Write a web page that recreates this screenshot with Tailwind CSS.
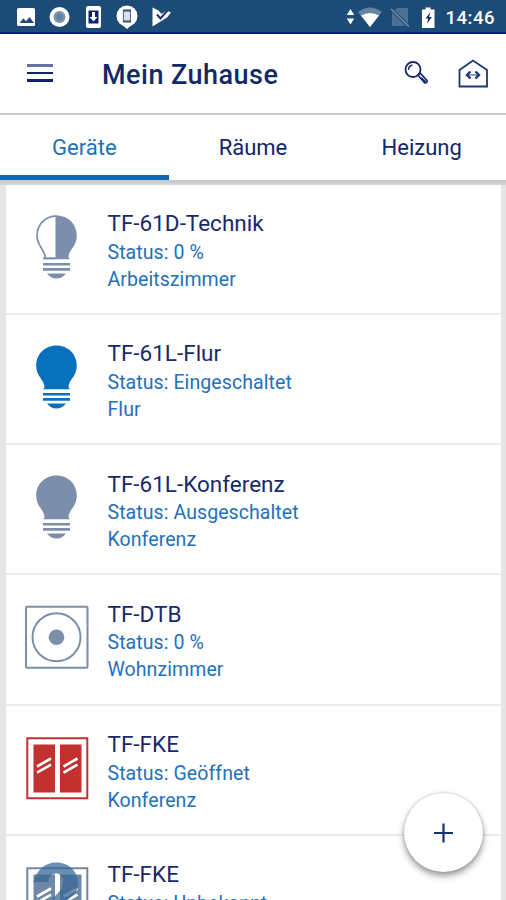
<!DOCTYPE html>
<html lang="de">
<head>
<meta charset="utf-8">
<title>Mein Zuhause</title>
<script src="https://cdn.jsdelivr.net/npm/@tailwindcss/browser@4"></script>
</head>
<body class="h-[900px] w-[506px] overflow-hidden bg-[#e6e6e6] font-['Roboto',sans-serif] text-[#10266b]">
<svg class="hidden">
  <defs>
    <symbol id="bulb" viewBox="0 0 64 64">
      <path d="M31.500.5C19.500.5 11.200 9.500 11.200 20.500C11.200 32 19.500 34.500 19.500 42.500L18 44.200H45L43.500 42.500C43.500 34.500 51.800 32 51.800 20.500C51.800 9.500 43.500.5 31.500.5Z"/>
      <path d="M18 48h27v2.500H18zM18 53h27v2.700H18zM22 58.500h19c-2 3-6 5-9.500 5s-7.500-2-9.500-5z"/>
    </symbol>
    <symbol id="window" viewBox="0 0 64 64">
      <path d="M2.300 2.300h60v60h-60z" fill="none" stroke="currentColor" stroke-width="2"/>
      <path d="M8.500 8.500h21.500v48H8.500zM35 8.500h21.500v48H35z" fill="currentColor"/>
      <path d="M12 30.500l14-8M12 36.700l14-8M38.500 30.500l14-8M38.500 36.700l14-8" stroke="#fff" stroke-width="2.600"/>
    </symbol>
  </defs>
</svg>
<div class="flex h-[900px] flex-col overflow-hidden">
  <div class="flex h-[34px] shrink-0 items-center justify-between border-b-2 border-[#0c216b] bg-[#1d4b78] text-white">
    <svg class="h-8 w-[180px]" viewBox="0 0 180 32" fill="#fff">
      <rect x="17" y="8" width="18" height="18" rx="1.500"/>
      <path d="M19.500 23l4-4.800 2.500 3 3.500-4.200 4.500 6z" fill="#1d4b78"/>
      <circle cx="59.500" cy="17" r="10"/><circle cx="59.500" cy="17" r="6" fill="#7793ad"/><circle cx="59.500" cy="17" r="3.200" fill="#6282a0"/>
      <rect x="86" y="6" width="15" height="22" rx="2"/>
      <path d="M88.500 10.500h10v13h-10z" fill="#0c216b"/><path d="M92 12h3v5h2.500l-4 4.500-4-4.500H92z"/>
      <circle cx="127" cy="16" r="10.500"/><path d="M121 24h12l-6 5z"/>
      <rect x="123.500" y="10.500" width="7" height="11" rx=".5" fill="#d9e0e8" stroke="#5e7692" stroke-width="1.200"/><path d="M123 10.500h8M123 21.500h8" stroke="#33507a" stroke-width="1.800"/>
      <path d="M152.500 7.500l6 3 3 3.500 5-3.500 4.500 2-4 5-14.500 9z"/><path d="M157 14.500l3.500 4 7-8" fill="none" stroke="#1d3577" stroke-width="2"/>
    </svg>
    <div class="flex items-center pr-[11px]">
      <svg class="h-8 w-[100px]" viewBox="0 0 100 32" fill="#fff">
        <path d="M2.800 15l3.700-6 3.700 6zM2.800 18.500h7.400l-3.700 6z"/>
        <path d="M14 12q12-9 24 0L26 27z" fill="#6784a2"/><path d="M17 15.500q9-5 18 0L26 27z"/>
        <path d="M53 8h11v18H48V13z" fill="#4c7094"/><path d="M47 9l18 17.500" stroke="#1d4b78" stroke-width="3.500"/><path d="M47 9l18 17.500" stroke="#7690aa" stroke-width="1.500"/>
        <path d="M78 9.500h3.500V7.500h5v2h4V28H78z"/><path d="M86.500 12l-5 6.500h2.800L83 24l4.800-7H85z" fill="#0c216b"/>
      </svg>
      <div class="pt-[3px] pl-[2px] text-[18.500px] leading-[30px] font-medium tracking-[0.5px]">14:46</div>
    </div>
  </div>
  <header class="flex h-[79px] shrink-0 items-center bg-white">
    <div class="ml-[27px] flex w-[26px] flex-col gap-[5px] pb-[2px]">
      <div class="h-[3px] bg-[#65749f]"></div><div class="h-[2.500px] bg-[#10206b]"></div><div class="h-[2.500px] bg-[#10206b]"></div>
    </div>
    <h1 class="ml-[49px] pt-[3px] text-[27px] font-medium tracking-[0.48px] text-[#0f2a66]">Mein Zuhause</h1>
    <svg class="mt-[-1px] mr-[29px] ml-auto h-[26px] w-[26px]" viewBox="0 0 26 26" fill="none" stroke="#12286c">
      <circle cx="10" cy="9.500" r="7.500" stroke-width="1.800"/><path d="M5.500 10c0-3 1.500-4.500 4-5" stroke-width="1.300"/>
      <path d="M15 15l2-2 7 7.500c.8 1.500-1 3-2.500 2.200z" stroke-width="1.700"/><path d="M18 18l4.500 4" stroke-width="2"/>
    </svg>
    <svg class="mr-[18px] mb-[2px] h-[30px] w-[30px]" viewBox="0 0 30 30" fill="none" stroke="#1d3679">
      <path d="M1.500 12L15 2.500l14 9.500V28.500H1.500z" stroke-width="1.800"/>
      <path d="M10 17h10" stroke="#7986ad" stroke-width="1.600"/><path d="M12.500 13.500L9 17l3.500 3.500M17.500 13.500L21 17l-3.500 3.500" stroke-width="2.400"/>
    </svg>
  </header>
  <nav class="grid h-[67px] shrink-0 grid-cols-3 border-t-2 border-[#c9c9c9] bg-white text-center text-[22px] leading-[65px]">
    <div class="h-[65px] border-b-[5px] border-[#0868b8] text-[#1c72bd]">Geräte</div>
    <div>Räume</div>
    <div>Heizung</div>
  </nav>
  <div class="h-[4.500px] shrink-0 bg-gradient-to-b from-[#c4c4c4] to-[#d8d8d8]"></div>
  <main id="devices" class="mr-[5px] ml-[6px] flex min-h-0 flex-1 flex-col overflow-hidden"></main>
</div>
<button class="absolute top-[793px] left-[404px] flex size-[79px] items-center justify-center rounded-full bg-white shadow-[0_4px_7px_rgba(0,0,0,0.4),0_0_3px_rgba(0,0,0,0.2)]">
  <svg class="size-5" viewBox="0 0 20 20" stroke="#153070" stroke-width="2.200"><path d="M9.500 .5v19M0 10h19"/></svg>
</button>
<script>
const bulb = '<use href="#bulb"/>';
const halfBulb = '<path d="M31.500 1.200C20 1.200 12 9.800 12 20.500C12 31.500 20.300 34.500 20.300 43.300H31.500" fill="none" stroke="currentColor" stroke-width="1.700"/><path d="M31.500.5C43.500.5 51.800 9.500 51.800 20.500C51.800 32 43.500 34.500 43.500 42.500L45 44.200H18V42.500H30.500V.5Z"/><path d="M18 48h27v2.500H18zM18 53h27v2.700H18zM22 58.500h19c-2 3-6 5-9.500 5s-7.500-2-9.500-5z"/>';
const dimmer = '<g fill="none" stroke="currentColor" stroke-width="2"><rect x="1" y="1.800" width="61.500" height="61" rx="1"/><circle cx="31.500" cy="32.300" r="24"/></g><circle cx="31.500" cy="32.300" r="7.800"/>';
const win = '<use href="#window"/>';
const unknown = win + '<path d="M8.500 16C12 3 21-3.500 31-3.500C45-3.500 53 6 53 18C53 31 39 31 39 44H24C24 29 38 28 38 17C38 10 35 7.500 31 7.500C26 7.500 24 11 23.500 16Z" fill="#386895" fill-opacity=".75"/>';
const rows = [
  ['TF-61D-Technik', '0 %', 'Arbeitszimmer', halfBulb, 'text-[#7b8faa]'],
  ['TF-61L-Flur', 'Eingeschaltet', 'Flur', bulb, 'text-[#0871bd]'],
  ['TF-61L-Konferenz', 'Ausgeschaltet', 'Konferenz', bulb, 'text-[#7b8faa]'],
  ['TF-DTB', '0 %', 'Wohnzimmer', dimmer, 'text-[#7b8faa]'],
  ['TF-FKE', 'Geöffnet', 'Konferenz', win, 'text-[#c2302f]'],
  ['TF-FKE', 'Unbekannt', '', unknown, 'text-[#6f88a6]'],
];
document.getElementById('devices').innerHTML = rows.map(([name, status, room, icon, color]) => `
  <div class="flex h-[130.300px] shrink-0 border-b-2 border-[#ededed] bg-white pl-[18.500px]">
    <svg class="mt-[30px] size-16 shrink-0 overflow-visible ${color}" viewBox="0 0 64 64" fill="currentColor">${icon}</svg>
    <div class="ml-[19px] pt-[24.500px]">
      <div class="text-[22.500px] leading-[28px] text-[#18296a]">${name}</div>
      <div class="pt-[1.500px] text-[19.500px] leading-[27px] tracking-[0.08px] text-[#2470ba]">Status: ${status}</div>
      <div class="text-[19.500px] leading-[27px] tracking-[0.08px] text-[#2470ba]">${room}</div>
    </div>
  </div>`).join('');
</script>
</body>
</html>
